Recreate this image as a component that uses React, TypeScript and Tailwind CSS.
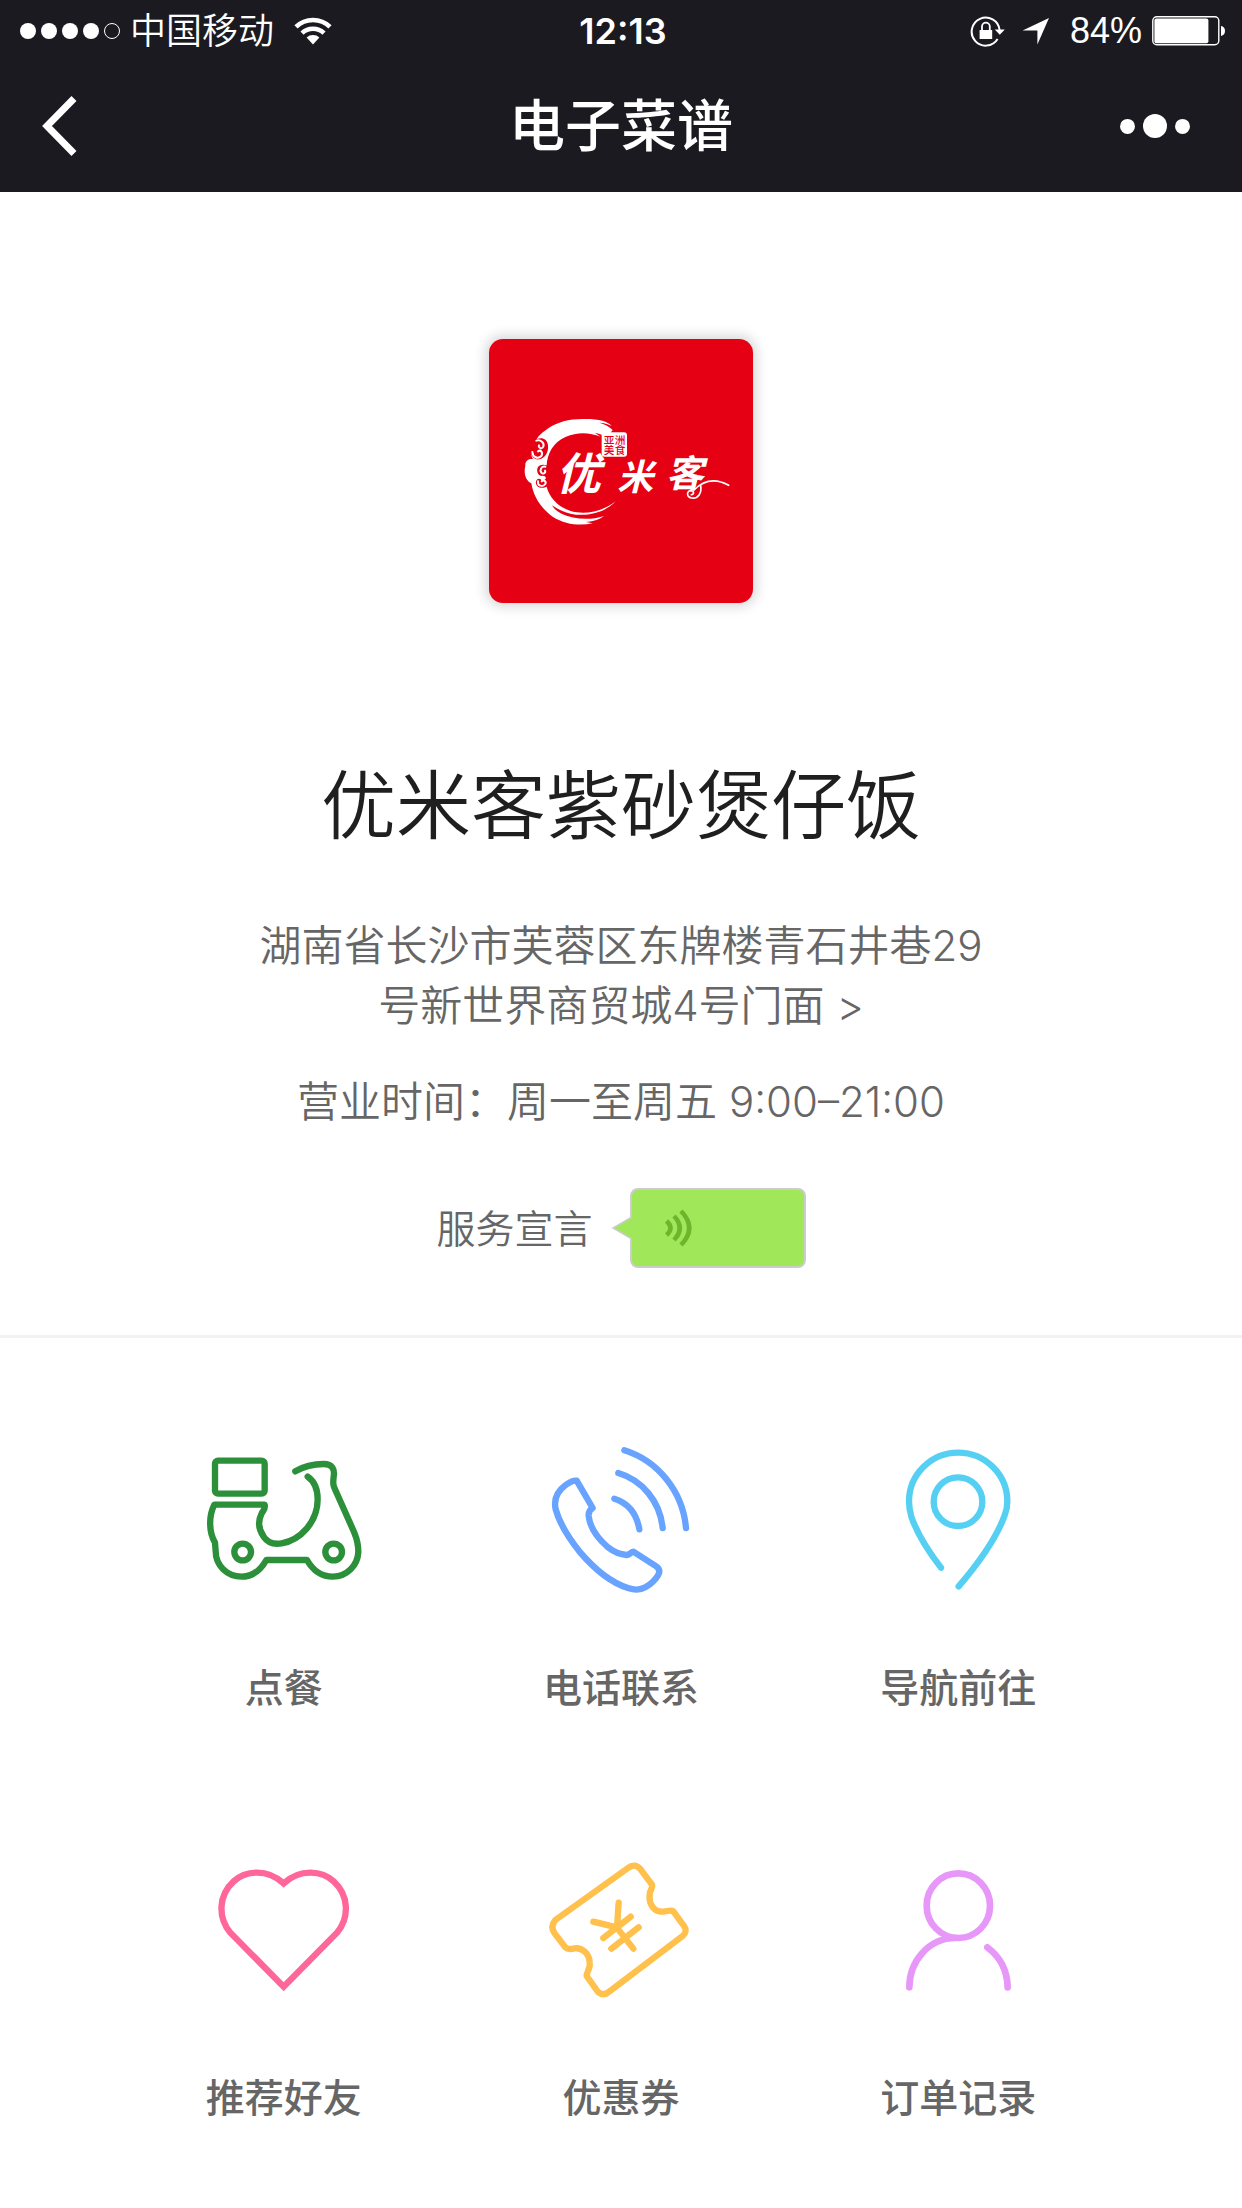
import React from 'react';

interface IconProps {
  className?: string;
}

interface MenuItem {
  id: string;
  label: string;
  icon: React.FC<IconProps>;
}

const SignalDots: React.FC = () => (
  <div className="flex gap-[5px]">
    {[0, 1, 2, 3].map((i) => (
      <span key={i} className="h-4 w-4 rounded-full bg-white" />
    ))}
    <span className="h-4 w-4 rounded-full border border-white" />
  </div>
);

const WifiIcon: React.FC<IconProps> = ({ className }) => (
  <svg viewBox="0 0 38 28" className={className} fill="none" stroke="#fff" strokeWidth="4.6">
    <path d="M2 9.8A24.5 24.5 0 0 1 36 9.8" />
    <path d="M8 16.2A16 16 0 0 1 30 16.2" />
    <path d="M19 27.5L12.6 20.6A9.5 9.5 0 0 1 25.4 20.6Z" fill="#fff" stroke="none" />
  </svg>
);

const RotationLockIcon: React.FC<IconProps> = ({ className }) => (
  <svg viewBox="0 0 36 32" className={className} fill="none" stroke="#fff">
    <path d="M27.6 24A14 14 0 1 1 29.6 15" strokeWidth="2" />
    <path d="M24.8 14.6h10l-5 5.2z" fill="#fff" stroke="none" />
    <rect x="9.6" y="15" width="12.6" height="9" fill="#fff" stroke="none" />
    <path d="M12 15v-3.4a3.9 3.9 0 0 1 7.8 0V15" strokeWidth="1.8" />
  </svg>
);

const LocationArrowIcon: React.FC<IconProps> = ({ className }) => (
  <svg viewBox="0 0 28 28" className={className} fill="#fff">
    <path d="M27 1L15.4 27.4V13.4H0.6z" />
  </svg>
);

const BatteryIcon: React.FC<IconProps> = ({ className }) => (
  <svg viewBox="0 0 74 30" className={className}>
    <rect x="0.8" y="0.8" width="66" height="28" rx="4" fill="none" stroke="#fff" strokeWidth="1.4" />
    <rect x="2.4" y="2.4" width="54" height="24.8" rx="2" fill="#fff" />
    <path d="M69 10a5 5 0 0 1 4 5a5 5 0 0 1-4 5z" fill="#fff" />
  </svg>
);

const BackIcon: React.FC<IconProps> = ({ className }) => (
  <svg viewBox="0 0 36 60" className={className} fill="none" stroke="#fff" strokeWidth="7">
    <path d="M32 2.5L5 30L32 57.5" />
  </svg>
);

const MoreIcon: React.FC<IconProps> = ({ className }) => (
  <svg viewBox="0 0 70 24" className={className} fill="#fff">
    <circle cx="7.5" cy="12.4" r="7.5" />
    <circle cx="35" cy="12" r="12" />
    <circle cx="62.5" cy="12.4" r="7.5" />
  </svg>
);

const ShopLogo: React.FC<IconProps> = ({ className }) => (
  <svg viewBox="57 57 792 792" className={className} role="img" aria-label="优米客">
    {/* brush ring */}
    <path
      d="M425 318C412 304 390 297 345 297C300 296 262 306 236 324C216 338 206 346 200 358C216 350 232 358 234 376C236 396 226 414 208 418C194 420 186 412 184 400C184 408 186 414 190 418C176 414 164 424 166 438C162 452 164 470 172 480C176 486 180 488 184 490C190 530 214 566 248 590C286 614 330 618 368 610L348 606C372 604 390 598 402 588C360 602 310 598 276 582C260 574 250 564 246 556C266 570 290 580 318 584C366 588 412 572 437 544C404 570 362 582 320 577C276 570 240 540 230 500C226 502 212 506 204 500C196 494 196 484 202 478C206 474 214 476 214 482C218 484 224 482 228 474C226 468 220 466 214 468C204 466 200 456 202 446C204 436 216 432 230 436C232 400 250 366 288 350C320 336 358 336 392 350L374 338C392 342 404 348 412 352L428 330C416 318 404 312 388 308C402 308 414 312 425 318Z"
      fill="#fff"
    />
    {/* cloud curls */}
    <path
      d="M199 362C212 358 224 368 220 380C216 388 204 384 207 376M187 396C188 412 204 418 214 408C220 398 212 388 204 394M226 440C214 438 208 450 214 458C220 464 228 458 225 452M204 484C202 498 218 502 226 492C230 484 220 478 215 484"
      fill="none"
      stroke="#fff"
      strokeWidth="6"
      strokeLinecap="round"
    />
    {/* seal */}
    <rect x="395" y="337" width="76" height="73" rx="9" fill="#fff" />
    <g fontSize="32" fontWeight="500" fill="#e60013">
      <text x="401" y="371">亚</text>
      <text x="434" y="371">洲</text>
      <text x="401" y="402">美</text>
      <text x="434" y="402">食</text>
    </g>
    <g fontWeight="700" fontStyle="italic" fill="#fff">
      <text x="258" y="510" fontSize="134">优</text>
      <text x="442" y="509" fontSize="108">米</text>
      <text x="588" y="500" fontSize="112">客</text>
    </g>
    {/* cloud tail */}
    <path
      d="M672 510C704 478 740 476 776 496M692 496C696 520 684 536 666 534C650 532 648 514 662 512C672 512 674 524 664 524"
      fill="none"
      stroke="#fff"
      strokeWidth="5"
      strokeLinecap="round"
    />
  </svg>
);

const SoundIcon: React.FC<IconProps> = ({ className }) => (
  <svg viewBox="0 0 28 38" className={className} fill="none" stroke="#6db52c" strokeWidth="4.6">
    <path d="M1.5 12Q9.5 19 1.5 26" />
    <path d="M9 7Q20.5 19 9 31" />
    <path d="M16 2Q32.5 19 16 36" />
  </svg>
);

const ScooterIcon: React.FC<IconProps> = ({ className }) => (
  <svg viewBox="71 60 480 480" className={className} fill="none" stroke="#2c8f3a" strokeWidth="19" strokeLinecap="round">
    <rect x="104" y="122" width="149" height="99" rx="9" />
    <path
      d="M345 154C372 138 404 132 430 132C456 132 464 148 460 170C457 196 460 200 466 212L522 338C532 362 534 374 534 396C532 436 500 470 458 470C424 470 398 452 380 420H258C240 452 216 470 184 470C140 470 106 436 106 394L104 368C86 338 84 290 102 254H253C256 268 248 272 244 280C232 304 236 330 250 350C262 368 280 374 304 370C360 360 412 306 412 238C412 208 402 184 382 170"
      strokeLinejoin="round"
    />
    <circle cx="187" cy="396" r="25" />
    <circle cx="460" cy="396" r="25" />
  </svg>
);

const PhoneIcon: React.FC<IconProps> = ({ className }) => (
  <svg viewBox="61 60 480 480" className={className} fill="none" stroke="#67a3ff" strokeWidth="19" strokeLinecap="round" strokeLinejoin="round">
    <path d="M168 182L216 264C206 270 203 276 204 288C208 324 232 356 262 382C282 398 300 404 318 405C328 404 330 396 338 395L408 440C418 448 418 456 412 466C402 482 388 494 374 502C360 510 340 510 322 504C272 488 220 446 176 394C146 356 116 308 105 268C98 236 110 214 134 196C146 187 158 180 168 182Z" />
    <path d="M281 236Q344 256 356 328" />
    <path d="M293 159C364 180 418 244 426 324" />
    <path d="M311 91C410 122 486 212 496 324" />
  </svg>
);

const PinIcon: React.FC<IconProps> = ({ className }) => (
  <svg viewBox="52 60 480 480" className={className} fill="none" stroke="#55d0f3" strokeWidth="19" strokeLinecap="round">
    <path d="M241 443C206 398 172 348 152 290C147 272 145 258 145 244C145 164 211 98 292 98C374 98 440 164 440 244C440 258 438 272 432 286C408 352 350 434 294 499" />
    <circle cx="292" cy="245" r="73" />
  </svg>
);

const HeartIcon: React.FC<IconProps> = ({ className }) => (
  <svg viewBox="71 30 480 480" className={className} fill="none" stroke="#ff679b" strokeWidth="19">
    <path d="M310 130C260 84 194 92 160 124C114 166 112 232 150 278L310 440L470 278C508 232 506 166 460 124C426 92 360 84 310 130Z" />
  </svg>
);

const CouponIcon: React.FC<IconProps> = ({ className }) => (
  <svg viewBox="61 30 480 480" className={className} fill="none" stroke="#ffc04c" strokeWidth="19" strokeLinecap="round" strokeLinejoin="round">
    <path d="M104 240L322 84C334 74 348 74 358 86L394 134C398 142 386 152 387 164C384 196 402 216 426 215C440 214 450 208 458 214L490 258C498 268 496 280 486 288L264 456C252 466 242 464 232 456L198 408C196 396 210 388 207 368C206 340 184 322 162 325C150 328 140 328 134 322L102 280C92 266 94 252 104 240Z" />
    <path d="M294 188C291 218 292 242 288 262L218 245M288 262L338 326M330 230L248 294M354 262L272 326" />
  </svg>
);

const UserIcon: React.FC<IconProps> = ({ className }) => (
  <svg viewBox="52 30 480 480" className={className} fill="none" stroke="#e697f8" strokeWidth="20" strokeLinecap="round">
    <ellipse cx="293" cy="197" rx="95" ry="97" />
    <path d="M146 442C146 364 204 294 284 294M380 322C420 352 440 392 441 442" />
  </svg>
);

const menuItems: MenuItem[] = [
  { id: 'order', label: '点餐', icon: ScooterIcon },
  { id: 'phone', label: '电话联系', icon: PhoneIcon },
  { id: 'navigate', label: '导航前往', icon: PinIcon },
  { id: 'share', label: '推荐好友', icon: HeartIcon },
  { id: 'coupon', label: '优惠券', icon: CouponIcon },
  { id: 'history', label: '订单记录', icon: UserIcon },
];

const Header: React.FC = () => (
  <header className="bg-[#1b1a20] text-white">
    <div className="grid h-[62px] grid-cols-[1fr_auto_1fr] items-center pl-5 pr-4">
      <div className="flex items-center">
        <SignalDots />
        <span className="ml-2.5 text-[36px] font-[350] leading-none">中国移动</span>
        <WifiIcon className="ml-5 h-7 w-[38px]" />
      </div>
      <span className="font-['Inter'] text-[36px] font-semibold leading-none">12:13</span>
      <div className="flex items-center justify-end">
        <RotationLockIcon className="h-8 w-9" />
        <LocationArrowIcon className="ml-4 h-7 w-7" />
        <span className="ml-5 font-['Liberation_Sans',sans-serif] text-[36px] leading-none">84%</span>
        <BatteryIcon className="ml-2.5 h-[30px] w-[74px]" />
      </div>
    </div>
    <div className="grid h-[130px] grid-cols-[1fr_auto_1fr] items-center px-10 pb-0.5">
      <button type="button" aria-label="返回" className="justify-self-start">
        <BackIcon className="h-[60px] w-10" />
      </button>
      <h1 className="text-[56px] font-medium leading-none">电子菜谱</h1>
      <button type="button" aria-label="更多" className="mr-3 justify-self-end">
        <MoreIcon className="h-6 w-[70px]" />
      </button>
    </div>
  </header>
);

const ShopInfo: React.FC = () => (
  <section className="flex flex-col items-center border-b-3 border-[#f2f2f2] pb-[67px] pt-[147px] text-center font-[350] text-[#666666]">
    <div className="h-[264px] w-[264px] overflow-hidden rounded-[14px] bg-[#e60013] shadow-[0_0_12px_4px_rgba(0,0,0,0.15)]">
      <ShopLogo className="h-full w-full" />
    </div>
    <h2 className="mt-[153px] text-[75px] leading-[100px] text-[#1f1f1f]">优米客紫砂煲仔饭</h2>
    <a href="#map" className="mt-[60px] max-w-[740px] text-[42px] leading-[60px]">
      湖南省长沙市芙蓉区东牌楼青石井巷29号新世界商贸城4号门面 &gt;
    </a>
    <p className="mt-9 text-[42px] leading-[60px]">营业时间：周一至周五 9:00–21:00</p>
    <div className="mt-14 flex items-center">
      <span className="text-[39px] leading-none">服务宣言</span>
      <button type="button" aria-label="播放服务宣言" className="ml-[18px] flex items-center">
        <svg viewBox="0 0 21 28" className="z-10 -mr-0.5 h-7 w-[21px]">
          <path d="M21 3L2 14L21 25" fill="#a0e75a" stroke="#cccccc" strokeWidth="1.5" />
        </svg>
        <span className="flex h-20 w-44 items-center rounded-lg border-2 border-[#cccccc] bg-[#a0e75a] pl-[33px]">
          <SoundIcon className="h-[38px] w-7" />
        </span>
      </button>
    </div>
  </section>
);

const App: React.FC = () => {
  return (
    <div className="min-h-screen bg-white font-['Inter','Noto_Sans_CJK_SC',sans-serif]">
      <Header />
      <main>
        <ShopInfo />
        <nav className="grid grid-cols-3 gap-y-[132px] px-[115px] pb-[80px] pt-[102px]">
          {menuItems.map(({ id, label, icon: Icon }) => (
            <a key={id} href={`#${id}`} className="flex flex-col items-center gap-[58px]">
              <Icon className="h-40 w-40" />
              <span className="text-[39px] font-medium leading-[60px] text-[#666666]">{label}</span>
            </a>
          ))}
        </nav>
      </main>
    </div>
  );
};

export default App;
